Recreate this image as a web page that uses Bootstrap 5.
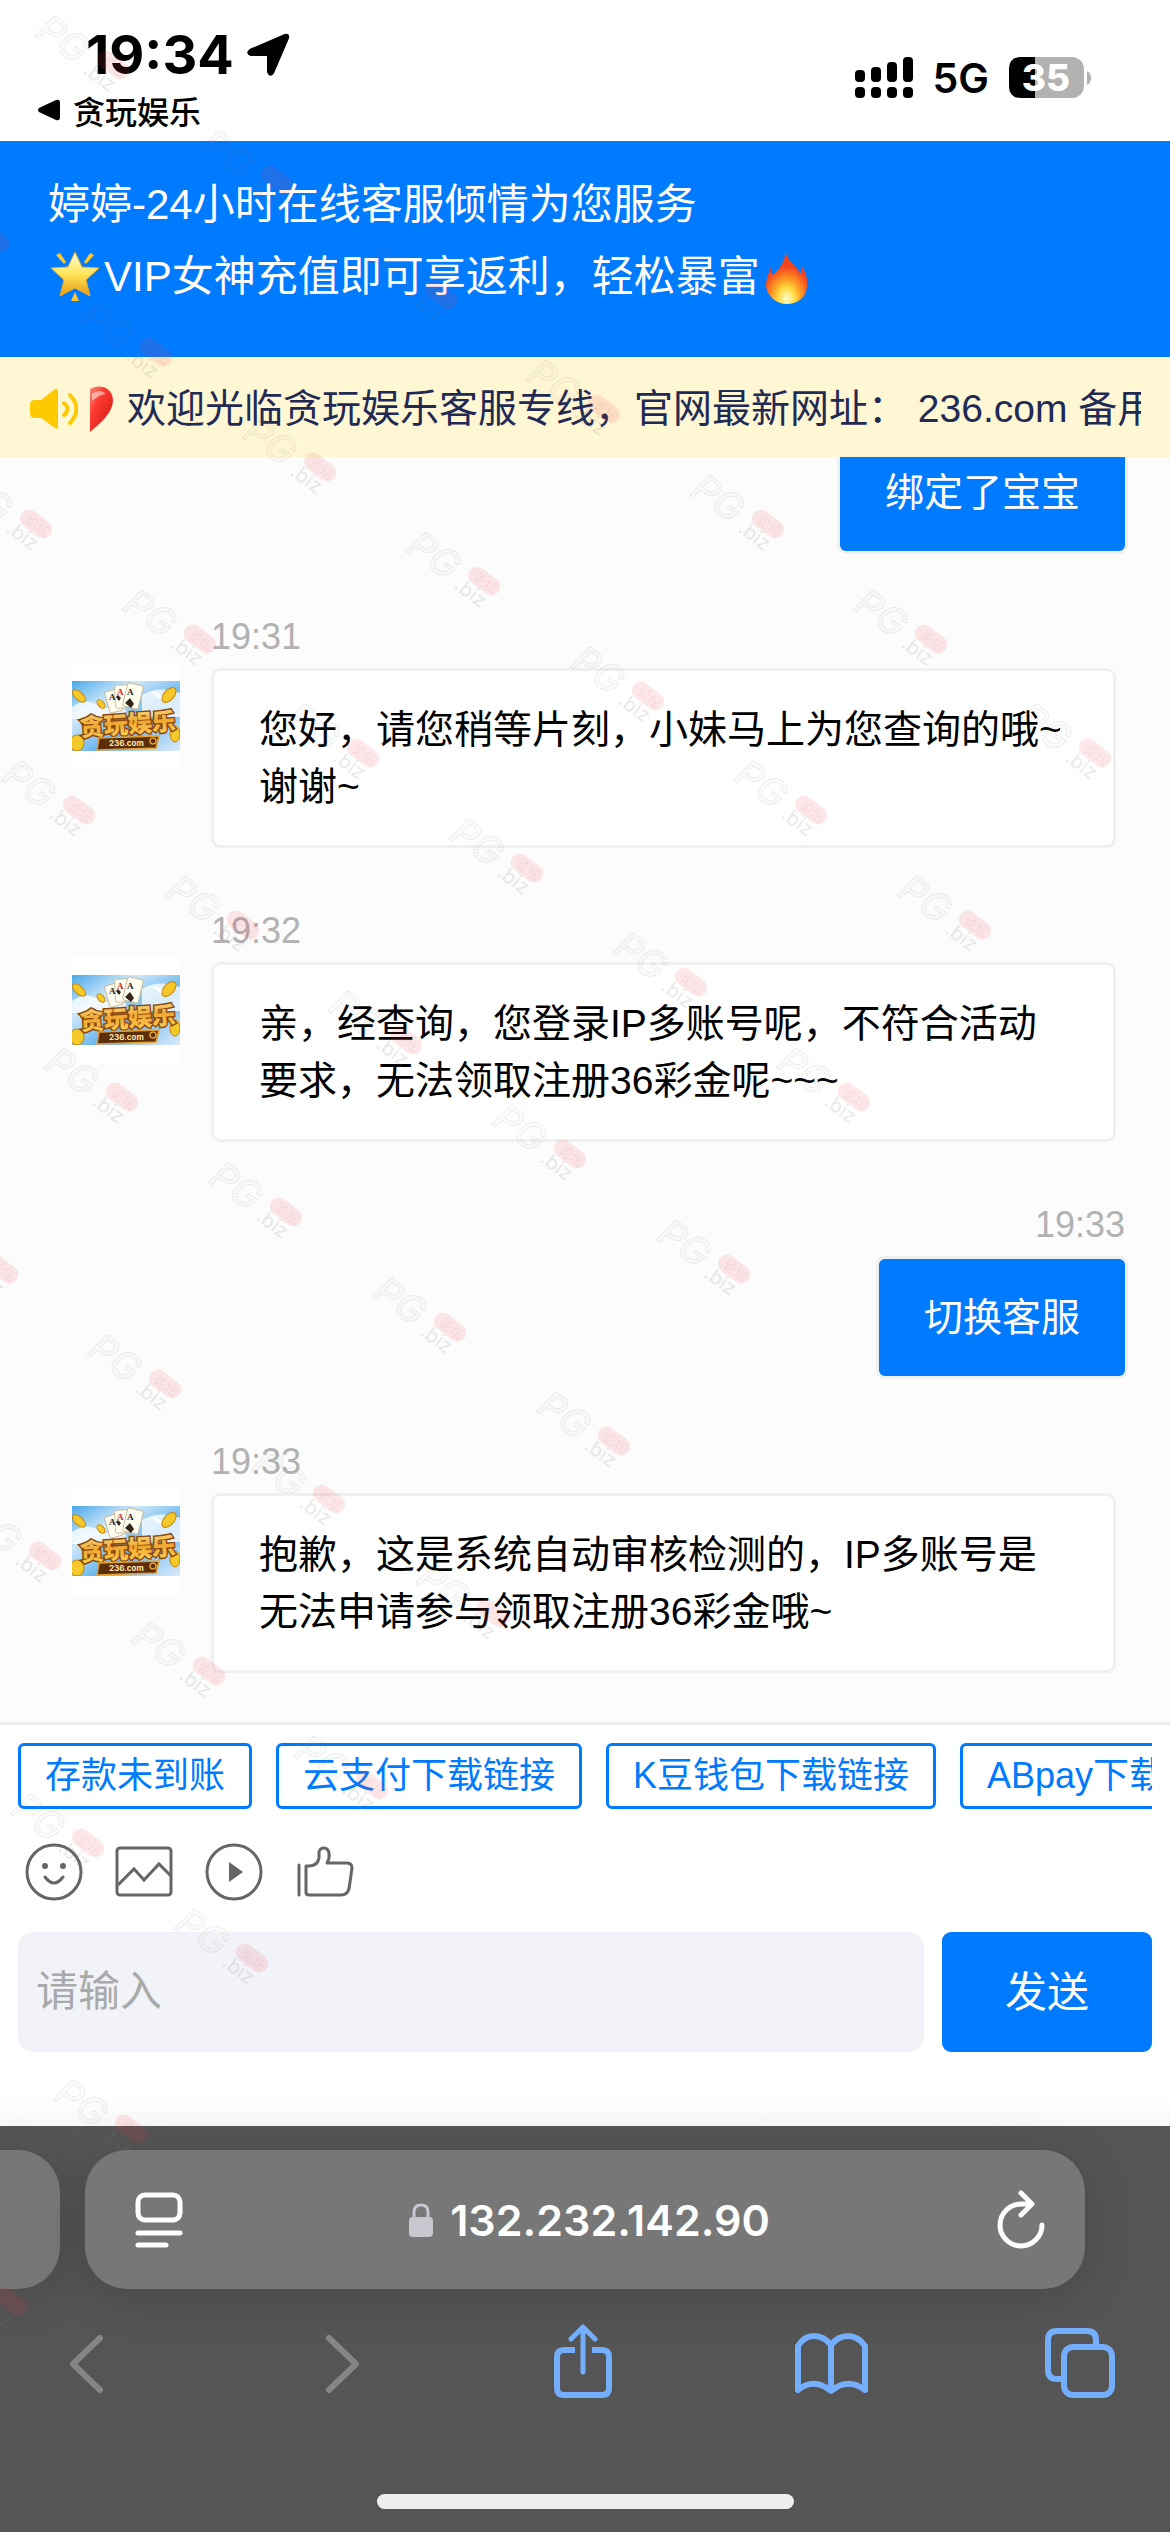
<!DOCTYPE html>
<html lang="zh-CN">
<head>
<meta charset="utf-8">
<meta name="viewport" content="width=device-width, initial-scale=1">
<title>在线客服</title>
<link href="https://cdn.jsdelivr.net/npm/bootstrap@5.3.0/dist/css/bootstrap.min.css" rel="stylesheet">
<style>
:root{--brand:#007aff;--ui:"Inter","Noto Sans CJK SC",sans-serif}
body{font-family:"Liberation Sans","Noto Sans CJK SC",sans-serif;color:#000;background:#fff}
button,input{font-family:inherit}
svg{display:block;flex:none}
.screen{height:100vh;overflow:hidden}
.statusbar{height:141px;padding:22px 78px 0 38px;font-family:var(--ui)}
.clock{font-size:54px;line-height:66px;font-weight:700;padding-left:48px;gap:12px}
.backlink{font-size:32px;line-height:44px;font-weight:500;color:#000;gap:13px;font-family:"Noto Sans CJK SC",sans-serif}
.signals{gap:20px;height:112px}
.net5g{font-size:41px;line-height:50px;font-weight:600}
.hero{background:var(--brand);color:#fff;font-size:42px;line-height:72px;padding:28px 48px 44px}
.notice{background:#fff6d3;color:#1f2a55;height:100px;font-size:39px;line-height:57px;padding:3px 29px 0 30px}
.ticker{overflow:hidden;white-space:nowrap;margin-left:12px}
.chat{background:#fcfcfc;border-bottom:3px solid #ebebeb;min-height:0;overflow:hidden;padding:0 45px 49px 72px}
.msg{padding-top:62px}
.stamp{font-size:36px;line-height:42px;margin-bottom:10px;color:#b2b2b2}
.face{width:108px;height:108px;background:#fff;margin:46px 31px 0 0}
.bubble{font-size:39px;line-height:57px;padding:30px 45px;border:3px solid #f0f0f0;border-radius:9px;background:#fff}
.theirs{margin-right:9px}
.mine{background:var(--brand);color:#fff;border:0;border-radius:6px;box-shadow:0 0 0 3px #f0f0f0;margin:3px 0}
.composer{padding:18px 18px 74px;background:linear-gradient(#fff 92%,#f8f8f8)}
.chips{overflow:hidden;gap:24px}
.chip{flex:none;font-size:36px;line-height:54px;padding:3px 24px;border:3px solid var(--brand);border-radius:6px;background:#fff;color:var(--brand);white-space:nowrap}
.tools{gap:30px;margin:33px 0 30px 6px}
.bare{border:0;background:none;padding:0}
.entry{gap:18px}
.field{height:120px;border:0;border-radius:15px;background:#f2f3f8;font-size:42px;padding:0 18px;min-width:0}
.field::placeholder{color:#aaa;opacity:1}
.send{width:210px;height:120px;border:0;border-radius:9px;background:var(--brand);color:#fff;font-size:42px}
.browser{background:#555;height:406px;padding-top:24px;font-family:var(--ui)}
.tabs-row{gap:25px;padding-right:85px}
.tabpane{height:139px;background:#777;border-radius:42px;box-shadow:0 8px 50px rgba(0,0,0,.16)}
.stub{width:60px;border-radius:0 42px 42px 0}
.tabmain{padding:0 39px 0 48px;color:#fff}
.address{font-size:43px;line-height:60px;font-weight:600;gap:17px}
.navkeys{padding:35px 54px 0 50px}
.homebar{width:417px;height:15px;border-radius:8px;background:#efefef;margin:90px auto 0}
.marks{left:0;top:0;width:100%;height:100%;pointer-events:none;z-index:5}
</style>
<script src="https://cdn.jsdelivr.net/npm/bootstrap@5.3.0/dist/js/bootstrap.bundle.min.js"></script>
</head>
<body>
<svg width="0" height="0" class="position-absolute" aria-hidden="true">
  <defs>
    <linearGradient id="gold" x1="0" y1="0" x2="0" y2="1"><stop offset="0" stop-color="#ffeaa0"/><stop offset=".5" stop-color="#f0a830"/><stop offset="1" stop-color="#ffd75e"/></linearGradient>
    <linearGradient id="sky" x1="0" y1="0" x2="1" y2="1"><stop offset="0" stop-color="#4aa8e8"/><stop offset=".3" stop-color="#cfe8fa"/><stop offset=".6" stop-color="#69b6ee"/><stop offset="1" stop-color="#dceafa"/></linearGradient>
    <linearGradient id="starfill" x1="0" y1="0" x2="0" y2="1"><stop offset="0" stop-color="#fffbe0"/><stop offset=".5" stop-color="#ffe65a"/><stop offset="1" stop-color="#e79a12"/></linearGradient>
    <radialGradient id="flame" cx=".5" cy=".9" r=".8"><stop offset="0" stop-color="#fffbd0"/><stop offset=".25" stop-color="#ffdc45"/><stop offset=".45" stop-color="#ff9a24"/><stop offset=".75" stop-color="#f2431f"/></radialGradient>
    <linearGradient id="redfill" x1="0" y1="0" x2="1" y2="1"><stop offset="0" stop-color="#ff8a80"/><stop offset=".35" stop-color="#fb3a30"/><stop offset="1" stop-color="#d01515"/></linearGradient>
    <symbol id="logo" viewBox="0 0 108 70">
      <rect width="108" height="70" fill="url(#sky)"/>
      <path d="M0 26q14-10 26-2t22-6l10 20H0zM70 14q16-10 38-2v24H70z" fill="#fff" opacity=".75"/>
      <path d="M78 10q8 2 12 5l12-4-8 8-6-1z" fill="#fff"/>
      <g fill="#f5c92a" stroke="#c98306"><ellipse cx="7" cy="15" rx="4" ry="8" transform="rotate(-48 7 15)"/><ellipse cx="29" cy="23" rx="3" ry="5" transform="rotate(-40 29 23)"/><ellipse cx="97" cy="14" rx="5" ry="9" transform="rotate(42 97 14)"/><ellipse cx="5" cy="62" rx="7" ry="8"/><ellipse cx="103" cy="53" rx="5" ry="8"/></g>
      <g fill="#fffdf0" stroke="#b9a67c" stroke-width=".7"><rect x="35" y="9" width="14" height="22" rx="2" transform="rotate(-16 42 20)"/><rect x="43" y="4" width="14" height="23" rx="2" transform="rotate(-3 50 15)"/><rect x="53" y="3" width="16" height="24" rx="2" transform="rotate(14 61 15)"/></g>
      <g font-family="Liberation Serif,serif" font-size="9" font-weight="700"><text x="37" y="19" fill="#222">A</text><text x="45" y="14" fill="#c22">A</text><text x="55" y="14" fill="#222">A</text></g>
      <path d="M53 22l5-5 4 6-3 4zM44 16l2-2 3 3-2 3z" fill="#35251a"/>
      <text x="8" y="52" font-family="Noto Sans CJK SC,sans-serif" font-size="24" font-weight="900" fill="url(#gold)" stroke="#8a4a10" stroke-width="3" paint-order="stroke" transform="rotate(-4 54 46)">贪玩娱乐</text>
      <path d="M27 57l60-2-3 12-59 2z" fill="#5c2d0b" stroke="#e2a02e" stroke-width="1.5"/>
      <text x="37" y="65" font-family="Inter,sans-serif" font-size="8" font-weight="700" fill="#ffe9b0">236.com</text>
      <circle cx="81" cy="60" r="3" fill="none" stroke="#e2a02e" stroke-width="1.5"/>
    </symbol>
    <g id="wm">
      <text transform="translate(-17 21) rotate(35)" font-family="Inter,sans-serif" font-size="38" font-weight="500" font-style="italic" fill="#888" fill-opacity=".03" stroke="#777" stroke-opacity=".2" stroke-width="1" stroke-dasharray="2 1">PG</text>
      <rect x="-18" y="-9" width="36" height="18" rx="9" transform="translate(62 51) rotate(37)" fill="#f03c46" fill-opacity=".12"/>
      <text transform="translate(50 49) rotate(37)" font-family="Noto Sans CJK SC,sans-serif" font-size="13" fill="#a33" fill-opacity=".09">论坛</text>
      <text transform="translate(31 58) rotate(37)" font-family="Inter,sans-serif" font-size="20" fill="#777" fill-opacity=".18">.biz</text>
    </g>
  </defs>
</svg>

<div class="screen d-flex flex-column position-relative">
  <div class="statusbar d-flex justify-content-between flex-shrink-0">
    <div>
      <div class="clock d-flex align-items-center">19:34
        <svg width="44" height="44" viewBox="0 0 44 44"><path d="M39 2Q43 1 42 5L27 40Q24 44 22 39V22H5Q0 20 4 17Z" stroke="#000" stroke-width="2" stroke-linejoin="round"/></svg>
      </div>
      <a href="#" class="backlink d-flex align-items-center text-decoration-none"><svg width="22" height="22" viewBox="0 0 22 22"><path d="M1 9L18 1Q22 0 22 4V18Q22 22 18 21L1 13Q-1 11 1 9Z"/></svg>贪玩娱乐</a>
    </div>
    <div class="signals d-flex align-items-center">
      <svg width="58" height="42" viewBox="0 0 58 42"><rect y="13" width="10" height="12" rx="4"/><rect x="16" y="10" width="10" height="15" rx="4"/><rect x="32" y="5" width="10" height="20" rx="4"/><rect x="48" width="10" height="25" rx="4"/><rect y="30" width="10" height="11" rx="4"/><rect x="16" y="30" width="10" height="11" rx="4"/><rect x="32" y="30" width="10" height="11" rx="4"/><rect x="48" y="30" width="10" height="11" rx="4"/></svg>
      <span class="net5g">5G</span>
      <svg width="83" height="42" viewBox="0 0 83 42"><rect width="75" height="41" rx="12" fill="#b2b2b2"/><path d="M26 0H12Q0 0 0 12V29Q0 41 12 41H26Z"/><path d="M78 14q4 2 4 7t-4 7z" fill="#b2b2b2"/><text x="37" y="34" text-anchor="middle" font-family="Inter,sans-serif" font-size="37" font-weight="800" fill="#fff">35</text></svg>
    </div>
  </div>

  <header class="hero flex-shrink-0">
    <div>婷婷-24小时在线客服倾情为您服务</div>
    <div class="d-flex align-items-center">
      <svg width="56" height="54" viewBox="0 0 56 54"><path d="M27 2l7 15 17 1-13 12 4 16-15-8-15 8 4-16L3 18l17-1z" fill="url(#starfill)" stroke="#f3ab1c" stroke-linejoin="round"/><path d="M8 5l4-2 6 9-2 2zM46 5l-4-2-6 9 2 2zM27 42l4 9h-8z" fill="#ffc62e"/></svg>VIP女神充值即可享返利，轻松暴富<svg width="54" height="56" viewBox="0 0 54 56"><path d="M25 1c2 12 14 17 15 24 2-3 2-6 1-9 5 7 7 14 6 22-1 10-9 17-20 17S7 47 6 37c0-8 3-13 5-19 0 3 0 6 2 8C21 18 26 11 25 1z" fill="url(#flame)"/></svg>
    </div>
  </header>

  <div class="notice d-flex align-items-center flex-shrink-0">
    <svg width="48" height="42" viewBox="0 0 48 42"><path d="M5 12H11L25 1Q28 0 28 3V39Q28 42 25 40L11 30H5Q0 30 0 25V17Q0 12 5 12Z" fill="#ffc900"/><path d="M34 15q7 6 0 12M40 7q13 14 0 28" fill="none" stroke="#ffc900" stroke-width="4" stroke-linecap="round"/></svg>
    <div class="ticker d-flex align-items-center flex-grow-1">
      <svg width="37" height="46" viewBox="0 0 37 46"><path d="M0 3C8-2 22 0 23 14 23 26 12 36 0 46Z" fill="url(#redfill)"/><path d="M2 8q8-6 14 0-7 1-14 7z" fill="#fff" opacity=".5"/></svg>欢迎光临贪玩娱乐客服专线，官网最新网址：&nbsp;236.com 备用
    </div>
  </div>

  <main class="chat d-flex flex-column justify-content-end flex-grow-1">
    <div class="msg d-flex flex-column align-items-end flex-shrink-0">
      <div class="bubble mine">绑定了宝宝</div>
    </div>
    <div class="msg d-flex flex-shrink-0">
      <div class="face d-flex align-items-center flex-shrink-0"><svg width="108" height="70"><use href="#logo"/></svg></div>
      <div class="theirs flex-grow-1"><div class="stamp">19:31</div><div class="bubble">您好，请您稍等片刻，小妹马上为您查询的哦~<br>谢谢~</div></div>
    </div>
    <div class="msg d-flex flex-shrink-0">
      <div class="face d-flex align-items-center flex-shrink-0"><svg width="108" height="70"><use href="#logo"/></svg></div>
      <div class="theirs flex-grow-1"><div class="stamp">19:32</div><div class="bubble">亲，经查询，您登录IP多账号呢，不符合活动<br>要求，无法领取注册36彩金呢~~~</div></div>
    </div>
    <div class="msg d-flex flex-column align-items-end flex-shrink-0">
      <div class="stamp">19:33</div>
      <div class="bubble mine">切换客服</div>
    </div>
    <div class="msg d-flex flex-shrink-0">
      <div class="face d-flex align-items-center flex-shrink-0"><svg width="108" height="70"><use href="#logo"/></svg></div>
      <div class="theirs flex-grow-1"><div class="stamp">19:33</div><div class="bubble">抱歉，这是系统自动审核检测的，IP多账号是<br>无法申请参与领取注册36彩金哦~</div></div>
    </div>
  </main>

  <section class="composer flex-shrink-0">
    <div class="chips d-flex">
      <button class="chip" type="button">存款未到账</button>
      <button class="chip" type="button">云支付下载链接</button>
      <button class="chip" type="button">K豆钱包下载链接</button>
      <button class="chip" type="button">ABpay下载链接</button>
    </div>
    <div class="tools d-flex">
      <button class="bare" type="button" aria-label="表情"><svg width="60" height="60" viewBox="0 0 60 60" fill="none" stroke="#666" stroke-width="3"><circle cx="30" cy="30" r="27"/><circle cx="21" cy="24" r="3" fill="#666" stroke="none"/><circle cx="39" cy="24" r="3" fill="#666" stroke="none"/><path d="M21 35q9 12 18 0" stroke-linecap="round"/></svg></button>
      <button class="bare" type="button" aria-label="图片"><svg width="60" height="60" viewBox="0 0 60 60" fill="none" stroke="#666" stroke-width="3"><rect x="3" y="6" width="54" height="47" rx="3"/><path d="M4 43L20 27 30 38 45 22 57 34"/></svg></button>
      <button class="bare" type="button" aria-label="视频"><svg width="60" height="60" viewBox="0 0 60 60" fill="none" stroke="#666" stroke-width="3"><circle cx="30" cy="30" r="27"/><path d="M25 20L39 30 25 40Z" fill="#666" stroke="none"/></svg></button>
      <button class="bare" type="button" aria-label="点赞"><svg width="60" height="60" viewBox="0 0 60 60" fill="none" stroke="#666" stroke-width="3" stroke-linejoin="round" stroke-linecap="round"><path d="M5 23V53M12 24H16Q24 23 25 16V10Q26 6 30 6T35 11Q36 16 33 21H53Q58 21 58 26L55 47Q53 53 47 53H15Q12 53 12 50Z"/></svg></button>
    </div>
    <form class="entry d-flex" onsubmit="return false">
      <label class="visually-hidden" for="say">消息</label>
      <input id="say" class="field flex-grow-1" type="text" placeholder="请输入" autocomplete="off">
      <button class="send flex-shrink-0" type="submit">发送</button>
    </form>
  </section>

  <footer class="browser flex-shrink-0">
    <div class="tabs-row d-flex">
      <div class="tabpane stub flex-shrink-0"></div>
      <div class="tabpane tabmain d-flex align-items-center justify-content-between flex-grow-1">
        <button class="bare" type="button" aria-label="页面菜单"><svg width="52" height="58" viewBox="0 0 52 58" fill="none" stroke="#fff" stroke-width="5" stroke-linecap="round"><rect x="5" y="4" width="42" height="25" rx="7"/><path d="M5 42H47M5 54H33"/></svg></button>
        <div class="address d-flex align-items-center"><svg width="24" height="34" viewBox="0 0 24 34"><rect y="14" width="24" height="20" rx="4" fill="#c8c8d0"/><path d="M5 16V9Q5 2 12 2T19 9V16" fill="none" stroke="#c8c8d0" stroke-width="3"/></svg>132.232.142.90</div>
        <button class="bare" type="button" aria-label="刷新"><svg width="52" height="60" viewBox="0 0 52 60" fill="none" stroke="#fff" stroke-width="5" stroke-linecap="round" stroke-linejoin="round"><path d="M48 35A21 21 0 1 1 27 14H37M27 3L38 14 27 25"/></svg></button>
      </div>
    </div>
    <nav class="navkeys d-flex justify-content-between" aria-label="浏览器">
      <button class="bare" type="button" aria-label="后退"><svg width="72" height="80" viewBox="0 0 72 80"><path d="M50 14L23 40 50 66" fill="none" stroke="#858585" stroke-width="6" stroke-linecap="round" stroke-linejoin="round"/></svg></button>
      <button class="bare" type="button" aria-label="前进"><svg width="72" height="80" viewBox="0 0 72 80"><path d="M31 14L58 40 31 66" fill="none" stroke="#858585" stroke-width="6" stroke-linecap="round" stroke-linejoin="round"/></svg></button>
      <button class="bare" type="button" aria-label="分享"><svg width="72" height="80" viewBox="0 0 72 80" fill="none" stroke="#74aefc" stroke-width="6" stroke-linecap="round" stroke-linejoin="round"><path d="M29 26H18Q11 26 11 33V64Q11 71 18 71H56Q63 71 63 64V33Q63 26 56 26H46" stroke-linecap="butt"/><path d="M37 48V4M25 15L37 3 49 15" stroke-width="5"/></svg></button>
      <button class="bare" type="button" aria-label="书签"><svg width="74" height="80" viewBox="0 0 74 80" fill="none" stroke="#74aefc" stroke-width="6" stroke-linecap="round" stroke-linejoin="round"><path d="M37 67Q20 53 4 66V22Q10 12 20 12T37 21Q44 12 54 12T71 22V66Q54 53 37 67ZM37 21V66"/></svg></button>
      <button class="bare" type="button" aria-label="标签页"><svg width="72" height="80" viewBox="0 0 72 80" fill="none" stroke="#74aefc" stroke-width="6"><rect x="20" y="23" width="48" height="48" rx="9"/><path d="M20 55H13Q4 55 4 46V16Q4 7 13 7H43Q52 7 52 16V23"/></svg></button>
    </nav>
    <div class="homebar"></div>
  </footer>

  <svg class="marks position-absolute" aria-hidden="true">
    <use href="#wm" x="51" y="14"/><use href="#wm" x="215" y="129"/><use href="#wm" x="379" y="244"/><use href="#wm" x="-69" y="187"/><use href="#wm" x="94" y="301"/><use href="#wm" x="542" y="358"/><use href="#wm" x="258" y="416"/><use href="#wm" x="-26" y="473"/>
    <use href="#wm" x="706" y="473"/><use href="#wm" x="422" y="530"/><use href="#wm" x="138" y="588"/><use href="#wm" x="869" y="588"/><use href="#wm" x="586" y="645"/><use href="#wm" x="301" y="702"/><use href="#wm" x="1033" y="702"/><use href="#wm" x="749" y="759"/><use href="#wm" x="17" y="759"/>
    <use href="#wm" x="465" y="817"/><use href="#wm" x="181" y="874"/><use href="#wm" x="913" y="874"/><use href="#wm" x="629" y="931"/><use href="#wm" x="344" y="989"/><use href="#wm" x="60" y="1046"/><use href="#wm" x="792" y="1046"/><use href="#wm" x="508" y="1103"/><use href="#wm" x="224" y="1161"/>
    <use href="#wm" x="672" y="1218"/><use href="#wm" x="-60" y="1218"/><use href="#wm" x="388" y="1276"/><use href="#wm" x="103" y="1333"/><use href="#wm" x="552" y="1390"/><use href="#wm" x="267" y="1448"/><use href="#wm" x="-17" y="1505"/><use href="#wm" x="431" y="1562"/><use href="#wm" x="147" y="1620"/>
    <use href="#wm" x="310" y="1734"/><use href="#wm" x="26" y="1792"/><use href="#wm" x="190" y="1907"/><use href="#wm" x="69" y="2078"/><use href="#wm" x="-51" y="2250"/>
  </svg>
</div>
</body>
</html>
